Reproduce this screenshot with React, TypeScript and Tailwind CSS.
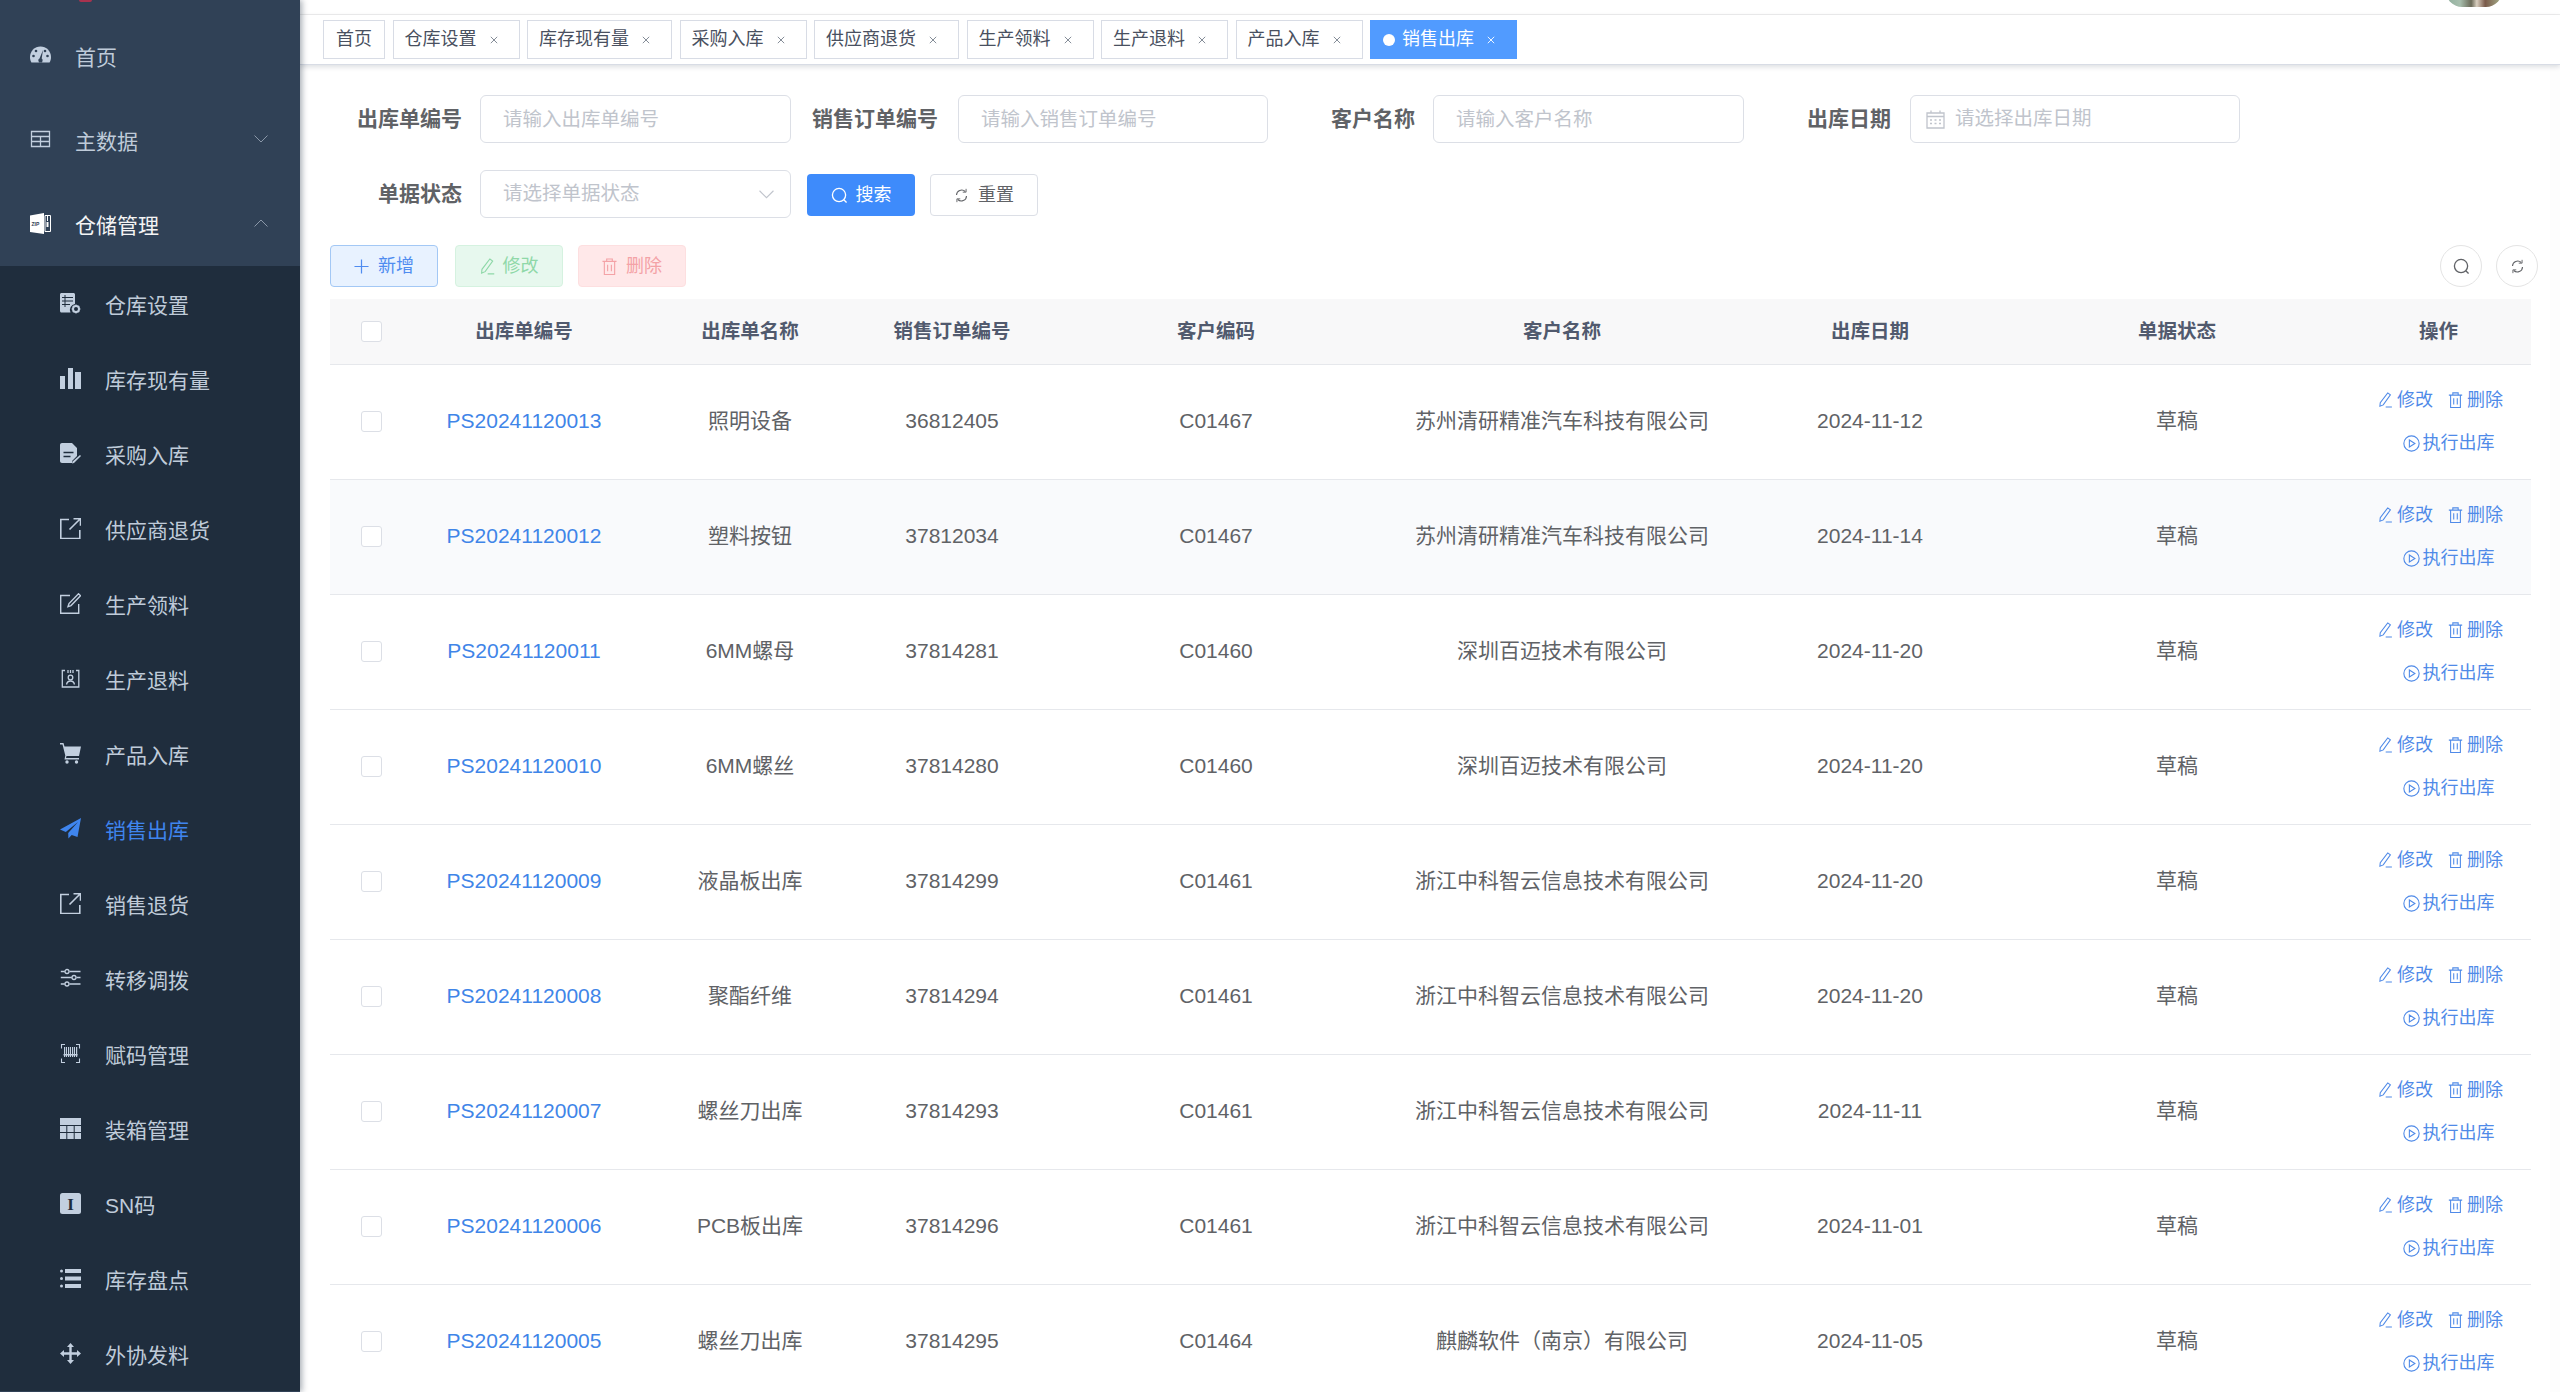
import React from "react";

type P = { className?: string };
const Svg = ({ className = "", children, vb = "0 0 21 21" }: P & { children: React.ReactNode; vb?: string }) => (
  <svg viewBox={vb} className={className} fill="currentColor" xmlns="http://www.w3.org/2000/svg">{children}</svg>
);
const sw = { fill: "none", stroke: "currentColor", strokeWidth: 1.3 } as const;

const Gauge = (p: P) => (
  <Svg {...p}>
    <path d="M10.5 1.5C4.7 1.5 0 6.2 0 12c0 2.2.5 3.900 1.400 5.500h18.200c.9-1.600 1.400-3.300 1.400-5.500 0-5.800-4.700-10.500-10.500-10.500z" />
    <g fill="#304156">
      <circle cx="3.500" cy="11" r="1.300" /><circle cx="6" cy="6" r="1.300" /><circle cx="15" cy="6" r="1.300" /><circle cx="17.500" cy="11" r="1.300" />
      <path d="M13 5l-3.500 8.500c-1 .5-1.500 1.500-1 2.500l.5 1.500h3l.5-1.500c.3-1 0-2-.8-2.500z" />
    </g>
  </Svg>
);
const TableOutline = (p: P) => (
  <Svg {...p}>
    <path {...sw} d="M1.500 2.500h18v15h-18zM1.500 7.500h18M1.500 12.500h18M10.500 7.500v10" />
  </Svg>
);
const Zip = (p: P) => (
  <Svg {...p}>
    <path fill="#fff" d="M0 2.500L14 0v21L0 19z" />
    <text x="1.500" y="12.500" fontSize="5" fontWeight="700" fill="#304156" fontFamily="Liberation Sans">ZIP</text>
    <path fill="none" stroke="#fff" strokeWidth="1" d="M15 2.500h5.500v16H15z" />
    <path fill="#fff" d="M17 3h1v5h-1zM16.500 9h2v5h-2z" />
  </Svg>
);
const ServerGear = (p: P) => (
  <Svg {...p}>
    <path d="M1.500 0h12c.8 0 1.500.7 1.500 1.500V11a6 6 0 0 0-4.500 8.500h-9C.7 19.500 0 18.800 0 18V1.500C0 .7.700 0 1.500 0z" />
    <path stroke="#1f2d3d" strokeWidth="1" fill="none" d="M2 4.500h11M2 8h11M2 11.500h8M5 2v12" />
    <circle cx="16" cy="16" r="3" fill="none" stroke="currentColor" strokeWidth="2" />
    <path stroke="currentColor" strokeWidth="1.200" d="M16 11.500v1.500M16 19v1.500M11.500 16H13M19 16h1.500M12.800 12.800l1 1M18.200 18.200l1 1M19.200 12.800l-1 1M13.800 18.200l-1 1" />
  </Svg>
);
const Bars = (p: P) => (
  <Svg {...p}><path d="M0 8h5v13H0zM8 0h5v21H8zM15 4h6v17h-6z" /></Svg>
);
const DocEdit = (p: P) => (
  <Svg {...p}>
    <path d="M2 0h10l5 5v8l-5 5v2H2C.9 20 0 19.100 0 18V2C0 .9.900 0 2 0z" />
    <path stroke="#1f2d3d" strokeWidth="1.500" d="M3.500 9.500h10M3.500 13.500h7" />
    <path d="M20 12l1 1-7 7-2 .6.6-2z" />
  </Svg>
);
const Ext = (p: P) => (
  <Svg {...p}>
    <path fill="none" stroke="currentColor" strokeWidth="1.600" d="M9 1.500H.8v19h19V12M20.300.8L9.500 11.500M13.500.8h7v7" />
  </Svg>
);
const EditBox = (p: P) => (
  <Svg {...p}>
    <path fill="none" stroke="currentColor" strokeWidth="1.400" d="M10 2.500H.7v17.800h18V11M18.500.8l2 2-9.500 9.800-3 1 1-3z" />
  </Svg>
);
const UserBox = (p: P) => (
  <Svg {...p}>
    <path fill="none" stroke="currentColor" strokeWidth="1.300" d="M5 2.500H2.300v16.500h16.500V2.500H16M8 2v3M10.500 2v3M13 2v3" />
    <circle cx="10.500" cy="9.500" r="2.300" fill="none" stroke="currentColor" strokeWidth="1.300" />
    <path fill="none" stroke="currentColor" strokeWidth="1.300" d="M6.500 16.500c.5-2.500 2-3.500 4-3.500s3.500 1 4 3.500" />
  </Svg>
);
const Cart = (p: P) => (
  <Svg {...p}>
    <path d="M0 0h3.500l1 3.500H21l-2 9.500H6.500L6 15h13v1.500H4.500l.8-4L2.500 1.500H0z" />
    <circle cx="7" cy="19" r="1.700" /><circle cx="16.500" cy="19" r="1.700" />
  </Svg>
);
const Plane = (p: P) => (
  <Svg {...p}><path d="M21 0L0 11.500l5.800 2.400L18 4 8.200 15l.2 5.500 3.300-3.600 5.800 2.100z" /></Svg>
);
const Sliders = (p: P) => (
  <Svg {...p}>
    <g fill="none" stroke="currentColor" strokeWidth="1.300">
      <path d="M.8 3.500h4M9.500 3.500h11M.8 9.500h11M16.500 9.500h4M.8 16h4M9.500 16h11" />
      <circle cx="7" cy="3.500" r="2" /><circle cx="14" cy="9.500" r="2" /><circle cx="7" cy="16" r="2" />
    </g>
  </Svg>
);
const Barcode = (p: P) => (
  <Svg {...p}>
    <path fill="none" stroke="currentColor" strokeWidth="1.100" d="M5 1.500H1.500v4M16 1.500h3.500v4M5 19.500H1.500v-4M16 19.500h3.500v-4" />
    <path d="M4 4h1.200v10H4zM6 4h1v10H6zM8 4h1.200v10H8zM10 4h1v10h-1zM12 4h1.200v10H12zM14 4h1v10h-1zM16 4h1.200v10H16z" />
    <path d="M3.500 11h14v1.500h-14z" />
  </Svg>
);
const GridFill = (p: P) => (
  <Svg {...p}><path d="M0 0h21v7H0zM0 8h6.300v6H0zM7.300 8h6.400v6H7.300zM14.700 8H21v6h-6.300zM0 15h6.300v6H0zM7.300 15h6.400v6H7.300zM14.700 15H21v6h-6.300z" /></Svg>
);
const IBox = (p: P) => (
  <Svg {...p}>
    <rect width="21" height="21" rx="2.500" />
    <text x="10.500" y="16.500" textAnchor="middle" fontSize="17" fontWeight="700" fill="#1f2d3d" fontFamily="Liberation Serif">I</text>
  </Svg>
);
const ListIcon = (p: P) => (
  <Svg {...p}>
    <path d="M5 1h16v4H5zM5 8.500h16v4H5zM5 16h16v4H5z" />
    <circle cx="1.500" cy="3" r="1.500" /><circle cx="1.500" cy="10.500" r="1.500" /><circle cx="1.500" cy="18" r="1.500" />
  </Svg>
);
const Move = (p: P) => (
  <Svg {...p}>
    <path d="M10.500 0l3.500 4h-2.300v5.300H17V7l4 3.500L17 14v-2.300h-5.300V17H14l-3.500 4L7 17h2.300v-5.300H4V14L0 10.500 4 7v2.300h5.300V4H7z" />
  </Svg>
);
const Chevron = ({ up, className = "" }: P & { up?: boolean }) => (
  <svg viewBox="0 0 14 8" className={className} fill="none" stroke="currentColor" strokeWidth="1">
    <path d={up ? "M.5 7.500L7 1l6.500 6.500" : "M.5.5L7 7 13.500.5"} />
  </svg>
);
const Search = ({ className = "" }: P) => (
  <svg viewBox="0 0 18 18" className={className} fill="none" stroke="currentColor" strokeWidth="1.400">
    <circle cx="8.500" cy="8.500" r="7" /><path d="M13.500 13.500l3 3" />
  </svg>
);
const Refresh = ({ className = "" }: P) => (
  <svg viewBox="0 0 18 18" className={className} fill="none" stroke="currentColor" strokeWidth="1.300">
    <path d="M3 8.500a6.200 6.200 0 0 1 10.500-4.300M15 9.500a6.200 6.200 0 0 1-10.500 4.300" />
    <path d="M14.500 1v4h-4M3.500 17v-4h4" strokeWidth="1.100" />
  </svg>
);
const Plus = ({ className = "" }: P) => (
  <svg viewBox="0 0 16 16" className={className} fill="none" stroke="currentColor" strokeWidth="1.300"><path d="M8 .5v15M.5 8h15" /></svg>
);
const Pencil = ({ className = "" }: P) => (
  <svg viewBox="0 0 16 18" className={className} fill="none" stroke="currentColor" strokeWidth="1.200">
    <path d="M10.500 1l3 2.200L5.500 14.500l-3.800 1.500.4-4zM8.200 16.800h7" />
  </svg>
);
const Trash = ({ className = "" }: P) => (
  <svg viewBox="0 0 16 18" className={className} fill="none" stroke="currentColor" strokeWidth="1.200">
    <path d="M.5 3.500h15M5 3.500V1h6v2.500M2.500 3.500v14h11v-14M6 7v7M10 7v7" />
  </svg>
);
const Play = ({ className = "" }: P) => (
  <svg viewBox="0 0 20 20" className={className} fill="none" stroke="currentColor" strokeWidth="1.300">
    <circle cx="10" cy="10" r="9" /><path d="M7.500 5.800L14 10l-6.500 4.200z" />
  </svg>
);
const Calendar = ({ className = "" }: P) => (
  <svg viewBox="0 0 19 19" className={className} fill="none" stroke="currentColor" strokeWidth="1.300">
    <path d="M1 3h17v15H1zM1 6.500h17M5 .5V3M14 .5V3" />
    <path d="M4 10h2M8.500 10h2M13 10h2M4 13.500h2M8.500 13.500h2M13 13.500h2" strokeWidth="1.500" />
  </svg>
);
const Close = ({ className = "" }: P) => (
  <svg viewBox="0 0 8 8" className={className} fill="none" stroke="currentColor" strokeWidth="0.900"><path d="M.8.8l6.400 6.400M7.200.8L.8 7.200" /></svg>
);

const topMenu = [
  { label: "首页", Icon: Gauge },
  { label: "主数据", Icon: TableOutline, arrow: "down" },
  { label: "仓储管理", Icon: Zip, arrow: "up", open: true },
];
const subMenu = [
  { label: "仓库设置", Icon: ServerGear },
  { label: "库存现有量", Icon: Bars },
  { label: "采购入库", Icon: DocEdit },
  { label: "供应商退货", Icon: Ext },
  { label: "生产领料", Icon: EditBox },
  { label: "生产退料", Icon: UserBox },
  { label: "产品入库", Icon: Cart },
  { label: "销售出库", Icon: Plane, active: true },
  { label: "销售退货", Icon: Ext },
  { label: "转移调拨", Icon: Sliders },
  { label: "赋码管理", Icon: Barcode },
  { label: "装箱管理", Icon: GridFill },
  { label: "SN码", Icon: IBox },
  { label: "库存盘点", Icon: ListIcon },
  { label: "外协发料", Icon: Move },
];
const tags = ["仓库设置", "库存现有量", "采购入库", "供应商退货", "生产领料", "生产退料", "产品入库"];
const rows = [
  ["PS20241120013", "照明设备", "36812405", "C01467", "苏州清研精准汽车科技有限公司", "2024-11-12"],
  ["PS20241120012", "塑料按钮", "37812034", "C01467", "苏州清研精准汽车科技有限公司", "2024-11-14"],
  ["PS20241120011", "6MM螺母", "37814281", "C01460", "深圳百迈技术有限公司", "2024-11-20"],
  ["PS20241120010", "6MM螺丝", "37814280", "C01460", "深圳百迈技术有限公司", "2024-11-20"],
  ["PS20241120009", "液晶板出库", "37814299", "C01461", "浙江中科智云信息技术有限公司", "2024-11-20"],
  ["PS20241120008", "聚酯纤维", "37814294", "C01461", "浙江中科智云信息技术有限公司", "2024-11-20"],
  ["PS20241120007", "螺丝刀出库", "37814293", "C01461", "浙江中科智云信息技术有限公司", "2024-11-11"],
  ["PS20241120006", "PCB板出库", "37814296", "C01461", "浙江中科智云信息技术有限公司", "2024-11-01"],
  ["PS20241120005", "螺丝刀出库", "37814295", "C01464", "麒麟软件（南京）有限公司", "2024-11-05"],
];
const heads = ["出库单编号", "出库单名称", "销售订单编号", "客户编码", "客户名称", "出库日期", "单据状态", "操作"];

const Checkbox = () => <span className="block w-[21px] h-[21px] mx-auto border border-[#dcdfe6] rounded-[3px] bg-white" />;

const Field = ({ label, labelW, gap, w, ph, ml = 0 }: { label: string; labelW: string; gap: string; w: string; ph: string; ml?: number }) => (
  <div className={`flex items-center ${ml ? "ml-[21px]" : ""}`}>
    <label className={`${labelW} ${gap} text-right text-[21px] font-bold text-[#606266] leading-[48px] whitespace-nowrap`}>{label}</label>
    <input readOnly placeholder={ph} className={`${w} h-[48px] border border-[#dcdfe6] rounded-[6px] bg-white pl-[22px] pr-[20px] text-[19.5px] outline-none placeholder:text-[#c0c4cc]`} />
  </div>
);

export default function App() {
  return (
    <div className="flex w-[2560px] h-[1392px] overflow-hidden bg-white [font-family:'Liberation_Sans','Noto_Sans_CJK_SC',sans-serif]">
      <aside className="relative z-20 w-[300px] shrink-0 bg-[#304156] shadow-[2px_0_6px_rgba(0,21,41,0.35)] overflow-hidden">
        <div className="h-[14px] pl-[79px]"><div className="w-[13px] h-[2px] rounded-b-full bg-[#a8324e]" /></div>
        {topMenu.map(({ label, Icon, arrow, open }) => (
          <div key={label} className={`flex items-center h-[84px] pl-[30px] pr-[32px] text-[21px] ${open ? "text-[#f4f4f5]" : "text-[#bfcbd9]"}`}>
            <Icon className="w-[21px] h-[21px] mr-[24px] -mt-[1px] shrink-0 text-[#c2cfdf]" />
            <span className="flex-1 mt-[4px]">{label}</span>
            {arrow && <Chevron up={arrow === "up"} className="w-[14px] h-[8px] -mt-[3px] text-[#8a97a8]" />}
          </div>
        ))}
        <div className="bg-[#1f2d3d]">
          {subMenu.map(({ label, Icon, active }) => (
            <div key={label} className={`flex items-center h-[75px] pl-[60px] text-[21px] ${active ? "text-[#3f85ee]" : "text-[#bfcbd9]"}`}>
              <Icon className={`w-[21px] h-[21px] mr-[24px] -mt-[1px] shrink-0 ${active ? "text-[#3f85ee]" : "text-[#c2cfdf]"}`} />
              <span className="mt-[4px]">{label}</span>
            </div>
          ))}
        </div>
      </aside>

      <main className="flex-1 min-w-0 flex flex-col">
        <header className="h-[15px] shrink-0 flex justify-end items-end overflow-hidden border-b border-[#eeeeee] pb-[7px] pr-[58px]">
          <div className="w-[56px] h-[60px] shrink-0 rounded-[16px] bg-[linear-gradient(90deg,#8fae9d_0%,#a8bfae_25%,#6b6a58_45%,#d9cfc0_55%,#7a5a4a_70%,#a8b48e_100%)]" />
        </header>

        <nav className="relative z-10 h-[50px] shrink-0 flex items-center gap-[7.5px] pl-[23px] bg-white border-b border-[#d8dce5] shadow-[0_2px_5px_rgba(0,21,41,0.14)]">
          <span className="flex items-center justify-center w-[62px] h-[39px] border border-[#d8dce5] text-[18px] text-[#495060]">首页</span>
          {tags.map((t) => (
            <span key={t} className="flex items-center h-[39px] pl-[11px] pr-[21px] border border-[#d8dce5] text-[18px] text-[#495060]">
              {t}
              <Close className="w-[8px] h-[8px] ml-[13px] mt-[1px] text-[#77808c]" />
            </span>
          ))}
          <span className="flex items-center w-[147px] h-[39px] pl-[13px] bg-[#519bff] text-white text-[18px]">
            <span className="w-[12px] h-[12px] rounded-full bg-white mr-[7px]" />
            销售出库
            <Close className="w-[8px] h-[8px] ml-[13px] mt-[1px] text-white" />
          </span>
        </nav>

        <div className="flex-1 min-h-0 flex">
          <section className="flex-1 min-w-0 pt-[30px] pl-[30px]">
            <div className="flex">
              <Field label="出库单编号" labelW="w-[132px]" gap="mr-[18px]" w="w-[311px]" ph="请输入出库单编号" />
              <Field label="销售订单编号" labelW="w-[126px]" gap="mr-[20px]" w="w-[310px]" ph="请输入销售订单编号" ml={21} />
              <Field label="客户名称" labelW="w-[147px]" gap="mr-[18px]" w="w-[311px]" ph="请输入客户名称" />
              <div className="flex items-center">
                <label className="w-[147px] mr-[19px] text-right text-[21px] font-bold text-[#606266] leading-[48px]">出库日期</label>
                <div className="flex items-center w-[330px] h-[48px] border border-[#dcdfe6] rounded-[6px] bg-white pl-[15px] text-[#c0c4cc]">
                  <Calendar className="w-[19px] h-[19px] mr-[10px]" />
                  <span className="text-[19.5px]">请选择出库日期</span>
                </div>
              </div>
            </div>

            <div className="flex mt-[27px]">
              <label className="w-[132px] mr-[18px] text-right text-[21px] font-bold text-[#606266] leading-[48px]">单据状态</label>
              <div className="flex items-center justify-between w-[311px] h-[48px] border border-[#dcdfe6] rounded-[6px] bg-white pl-[22px] pr-[16px] text-[#c0c4cc]">
                <span className="text-[19.5px]">请选择单据状态</span>
                <Chevron className="w-[15px] h-[9px]" />
              </div>
              <button className="flex items-center justify-center gap-[8px] w-[108px] h-[42px] mt-[4px] ml-[16px] rounded-[4px] bg-[#3e8bfb] text-white text-[18px]">
                <Search className="w-[17px] h-[17px]" />搜索
              </button>
              <button className="flex items-center justify-center gap-[9px] w-[108px] h-[42px] mt-[4px] ml-[15px] rounded-[4px] border border-[#dcdfe6] bg-white text-[#606266] text-[18px]">
                <Refresh className="w-[15px] h-[15px]" />重置
              </button>
            </div>

            <div className="flex items-center mt-[27px] w-[2208px]">
              <button className="flex items-center justify-center gap-[9px] w-[108px] h-[42px] rounded-[4px] border border-[#a3c8f5] bg-[#e8f2ff] text-[#4f8cf0] text-[18px]">
                <Plus className="w-[15px] h-[15px]" />新增
              </button>
              <button className="flex items-center justify-center gap-[8px] w-[108px] h-[42px] ml-[17px] rounded-[4px] border border-[#d5f2e0] bg-[#e7f8ee] text-[#8fd8a8] text-[18px]">
                <Pencil className="w-[15px] h-[17px]" />修改
              </button>
              <button className="flex items-center justify-center gap-[9px] w-[108px] h-[42px] ml-[15px] rounded-[4px] border border-[#fddfe0] bg-[#ffe8e9] text-[#f4a2a6] text-[18px]">
                <Trash className="w-[15px] h-[17px]" />删除
              </button>
              <div className="flex-1" />
              <span className="flex items-center justify-center w-[42px] h-[42px] rounded-full border border-[#e4e4e4] text-[#606266]"><Search className="w-[17px] h-[17px]" /></span>
              <span className="flex items-center justify-center w-[42px] h-[42px] ml-[14px] rounded-full border border-[#e4e4e4] text-[#606266]"><Refresh className="w-[15px] h-[15px]" /></span>
            </div>

            <table className="mt-[12px] w-[2201px] table-fixed border-collapse">
              <colgroup>
                <col className="w-[82px]" /><col className="w-[224px]" /><col className="w-[228px]" /><col className="w-[176px]" />
                <col className="w-[352px]" /><col className="w-[340px]" /><col className="w-[276px]" /><col className="w-[338px]" /><col className="w-[185px]" />
              </colgroup>
              <thead>
                <tr className="h-[65px] bg-[#f8f8f9] border-b border-[#e6e8ec]">
                  <th className="font-normal"><Checkbox /></th>
                  {heads.map((h) => (
                    <th key={h} className="text-center text-[19.5px] font-bold text-[#515a6e]">{h}</th>
                  ))}
                </tr>
              </thead>
              <tbody>
                {rows.map((r, i) => (
                  <tr key={r[0]} className={`h-[115px] border-b border-[#e6e8ec] ${i === 1 ? "bg-[#f9fafc]" : "bg-white"}`}>
                    <td><Checkbox /></td>
                    <td className="text-center text-[21px] text-[#3f85e8] pb-[1px]">{r[0]}</td>
                    {r.slice(1).map((c, j) => (
                      <td key={j} className="text-center text-[21px] text-[#606266] whitespace-nowrap pb-[2px]">{c}</td>
                    ))}
                    <td className="text-center text-[21px] text-[#606266] pb-[2px]">草稿</td>
                    <td>
                      <div className="flex flex-col items-center text-[18px] leading-[24px] text-[#4f8ae8]">
                        <div className="flex items-center ml-[4px]">
                          <span className="flex items-center gap-[4px]"><Pencil className="w-[15px] h-[16px]" />修改</span>
                          <span className="flex items-center gap-[4px] ml-[15px]"><Trash className="w-[15px] h-[16px]" />删除</span>
                        </div>
                        <div className="flex items-center mt-[19px] ml-[20px]">
                          <span className="flex items-center gap-[3px]"><Play className="w-[17px] h-[17px]" />执行出库</span>
                        </div>
                      </div>
                    </td>
                  </tr>
                ))}
              </tbody>
            </table>
          </section>
          <div className="w-[10px] shrink-0 bg-[#fdfdfd]" />
        </div>
      </main>
    </div>
  );
}
